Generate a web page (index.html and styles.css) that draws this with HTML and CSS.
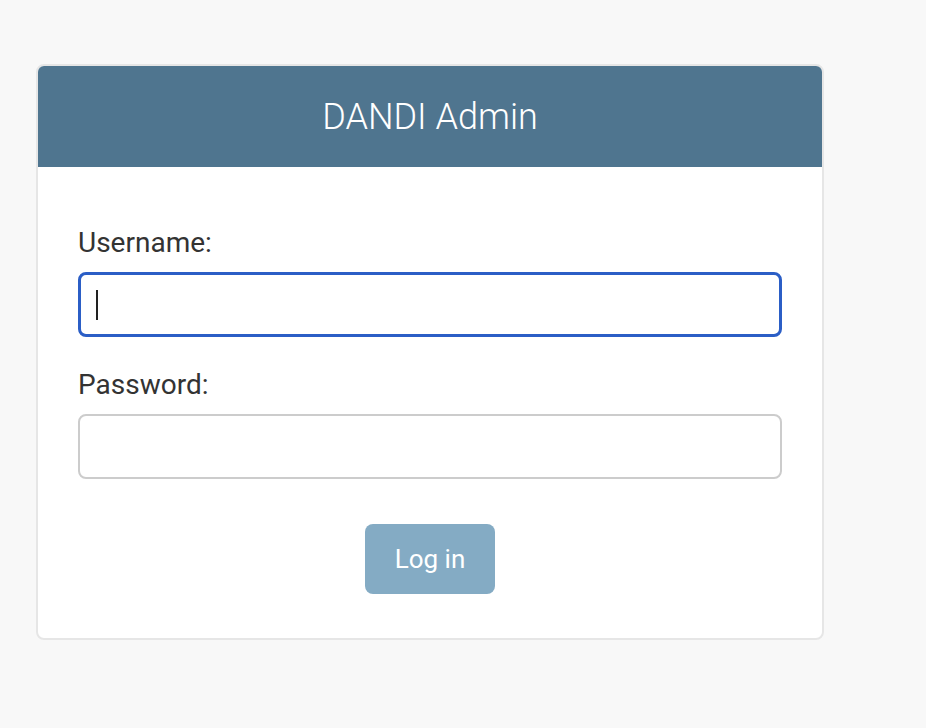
FILE: index.html
```html
<!DOCTYPE html>
<html lang="en">
<head>
<meta charset="utf-8">
<title>Log in | DANDI Admin</title>
<link rel="stylesheet" href="styles.css">
</head>
<body>
  <div class="login-card">
    <div class="card-header">
      <h1 class="site-title">DANDI Admin</h1>
    </div>
    <form class="card-body" onsubmit="return false;">
      <div class="form-row">
        <label class="field-label" for="id_username">Username:</label>
        <div class="input-wrap">
          <input class="text-input is-focused" type="text" id="id_username" name="username">
          <span class="caret"></span>
        </div>
      </div>
      <div class="form-row">
        <label class="field-label" for="id_password">Password:</label>
        <div class="input-wrap">
          <input class="text-input" type="password" id="id_password" name="password">
        </div>
      </div>
      <div class="submit-row">
        <button class="login-button" type="submit">Log in</button>
      </div>
    </form>
  </div>
</body>
</html>
```

FILE: styles.css
```css
* { box-sizing: border-box; }

html, body {
  margin: 0;
  padding: 0;
}

body {
  background: #f8f8f8;
  font-family: Roboto, "Liberation Sans", Arial, sans-serif;
  color: #333;
  padding: 64px 0 0 36px;
}

.login-card {
  width: 788px;
  background: #fff;
  border: 2px solid #e6e6e6;
  border-radius: 8px;
  overflow: hidden;
}

.card-header {
  height: 101px;
  background: #4f758f;
  display: flex;
  align-items: center;
  justify-content: center;
}

.site-title {
  margin: 0;
  font-weight: 300;
  font-size: 36px;
  line-height: 40px;
  color: #fff;
}

.card-body {
  padding: 60px 40px 44px 40px;
  display: flex;
  flex-direction: column;
}

.form-row {
  display: flex;
  flex-direction: column;
  margin-bottom: 32px;
}

.form-row + .form-row {
  margin-bottom: 45px;
}

.field-label {
  font-size: 28px;
  line-height: 32px;
  margin-bottom: 13px;
  color: #333;
}

.input-wrap {
  position: relative;
}

.text-input {
  display: block;
  width: 704px;
  height: 65px;
  border: 2px solid #cccccc;
  border-radius: 8px;
  padding: 0 16px;
  font-family: inherit;
  font-size: 28px;
  background: #fff;
  outline: none;
}

.text-input.is-focused {
  border: 3px solid #2b5ec6;
}

.caret {
  position: absolute;
  left: 18px;
  top: 18px;
  width: 2px;
  height: 30px;
  background: #222;
}

.submit-row {
  display: flex;
  justify-content: center;
}

.login-button {
  height: 70px;
  padding: 0 30px;
  background: #84abc4;
  color: #fff;
  border: none;
  border-radius: 8px;
  font-family: inherit;
  font-size: 26px;
  line-height: 30px;
  cursor: pointer;
}
```
